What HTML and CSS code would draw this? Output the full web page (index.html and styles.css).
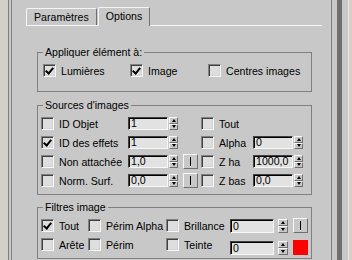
FILE: index.html
```html
<!DOCTYPE html>
<html>
<head>
	<title>Options</title>
	<link rel="stylesheet" href="styles.css">
</head>
<body>
	<div class="frame">
		<div class="panel">

			<!-- Tabs -->
			<div class="tabs">
				<div class="tab">Paramètres</div>
				<div class="tab selected">Options</div>
			</div>

			<!-- Appliquer élément à -->
			<fieldset class="group first">
				<legend>Appliquer élément à:</legend>
				<div class="row apply">
					<label class="item w87"><span class="cb on"></span>Lumières</label>
					<label class="item w78"><span class="cb on"></span>Image</label>
					<label class="item"><span class="cb"></span>Centres images</label>
				</div>
			</fieldset>

			<!-- Sources d'images -->
			<fieldset class="group sources">
				<legend>Sources d'images</legend>
				<div class="row">
					<label class="item w87"><span class="cb"></span>ID Objet</label>
					<div class="edit">1</div><div class="spin"><span></span><span class="dn"></span></div>
					<div class="slot"></div>
					<label class="item w52"><span class="cb"></span>Tout</label>
				</div>
				<div class="row">
					<label class="item w87"><span class="cb on"></span>ID des effets</label>
					<div class="edit">1</div><div class="spin"><span></span><span class="dn"></span></div>
					<div class="slot"></div>
					<label class="item w52"><span class="cb"></span>Alpha</label>
					<div class="edit">0</div><div class="spin"><span></span><span class="dn"></span></div>
				</div>
				<div class="row">
					<label class="item w87"><span class="cb"></span>Non attachée</label>
					<div class="edit">1,0</div><div class="spin"><span></span><span class="dn"></span></div>
					<div class="slot"><div class="btn"></div></div>
					<label class="item w52"><span class="cb"></span>Z ha</label>
					<div class="edit">1000,0</div><div class="spin"><span></span><span class="dn"></span></div>
				</div>
				<div class="row">
					<label class="item w87"><span class="cb"></span>Norm. Surf.</label>
					<div class="edit">0,0</div><div class="spin"><span></span><span class="dn"></span></div>
					<div class="slot"><div class="btn"></div></div>
					<label class="item w52"><span class="cb"></span>Z bas</label>
					<div class="edit">0,0</div><div class="spin"><span></span><span class="dn"></span></div>
				</div>
			</fieldset>

			<!-- Filtres image -->
			<fieldset class="group">
				<legend>Filtres image</legend>
				<div class="row">
					<label class="item w47"><span class="cb on"></span>Tout</label>
					<label class="item w78"><span class="cb"></span>Périm Alpha</label>
					<label class="item w64"><span class="cb"></span>Brillance</label>
					<div class="edit wide">0</div><div class="spin tall"><span></span><span class="dn"></span></div>
					<div class="btn"></div>
				</div>
				<div class="row">
					<label class="item w47"><span class="cb"></span>Arête</label>
					<label class="item w78"><span class="cb"></span>Périm</label>
					<label class="item w64"><span class="cb"></span>Teinte</label>
					<div class="edit wide low">0</div><div class="spin tall low"><span></span><span class="dn"></span></div>
					<div class="swatch low"></div>
				</div>
			</fieldset>

		</div>

		<!-- Right scroll strip -->
		<div class="scroll"><div class="thumb"></div></div>
	</div>
</body>
</html>
```
FILE: styles.css
```css
/* Reset */
* {
	margin: 0;
	padding: 0;
	box-sizing: border-box;
}

body {
	width: 352px;
	height: 260px;
	overflow: hidden;
	background-color: #d4d0c8;
	font-family: "Liberation Sans", Arial, sans-serif;
	font-size: 10.6px;
	color: #000;
}

/* Outer frame with double edge */
.frame {
	display: flex;
	width: 341px;
	height: 260px;
	margin-left: 8px;
	border-left: 1px solid #808080;
	border-right: 1px solid #e8e8e8;
	background-color: #c8c8c8;
}

.panel {
	flex: 1;
	margin-left: 2px;
	border-left: 1px solid #808080;
	padding-left: 14px;
}

.scroll {
	width: 17px;
	border-left: 1px solid #7a7a7a;
	padding-left: 5px;
}

.scroll .thumb {
	width: 5px;
	height: 100%;
	background-color: #6e6e6e;
}

/* Tabs */
.tabs {
	display: flex;
	align-items: flex-end;
	width: 296px;
	height: 26px;
	border-bottom: 1px solid #f4f4f4;
}

.tab {
	height: 17px;
	padding: 0 7px;
	margin-right: 1px;
	line-height: 16px;
	border-top: 1px solid #f4f4f4;
	border-left: 1px solid #f4f4f4;
	border-right: 1px solid #707070;
	border-radius: 2px 2px 0 0;
	white-space: nowrap;
}

.tab.selected {
	height: 19px;
	margin-bottom: -1px;
	line-height: 17px;
	background-color: #c8c8c8;
}

/* Group boxes */
.group {
	width: 275px;
	margin: 6px 0 0 11px;
	border: 1px solid #808080;
	padding: 3px 0 4px 0;
}

.group.first {
	margin-top: 20px;
	padding-bottom: 11px;
}

.group.sources {
	margin-top: 7px;
}

.group legend {
	margin-left: 5px;
	padding: 0 2px;
	line-height: 12px;
}

.row {
	display: flex;
	align-items: center;
	height: 19px;
	padding-left: 3px;
}

.row.apply {
	padding-left: 5px;
}

.item {
	display: flex;
	align-items: center;
	white-space: nowrap;
}

.w47 { width: 47px; }
.w52 { width: 52px; }
.w64 { width: 64px; }
.w78 { width: 78px; }
.w87 { width: 87px; }

/* Checkbox */
.cb {
	flex: none;
	width: 13px;
	height: 13px;
	margin-right: 5px;
	border: 1px solid;
	border-color: #808080 #f8f8f8 #f8f8f8 #808080;
	box-shadow: inset 1px 1px 0 #404040, inset -1px -1px 0 #d4d4d4;
	background-color: #dedede;
	position: relative;
}

.cb.on::after {
	content: "";
	position: absolute;
	left: 3px;
	top: 1px;
	width: 3px;
	height: 6px;
	border-right: 2px solid #000;
	border-bottom: 2px solid #000;
	transform: rotate(40deg);
}

/* Spinner edit */
.edit {
	flex: none;
	width: 40px;
	height: 13px;
	padding-left: 2px;
	line-height: 11px;
	border: 1px solid;
	border-color: #404040 #f8f8f8 #f8f8f8 #404040;
	box-shadow: inset 1px 1px 0 #000;
	background-color: #e2e2e2;
}

.edit.wide {
	width: 44px;
	height: 14px;
	line-height: 12px;
}

.spin {
	flex: none;
	display: flex;
	flex-direction: column;
	width: 9px;
	height: 13px;
	margin-left: 1px;
}

.spin.tall {
	width: 10px;
	height: 14px;
	margin-left: 4px;
}

.spin span {
	flex: 1;
	display: flex;
	align-items: center;
	justify-content: center;
	border: 1px solid;
	border-color: #f8f8f8 #707070 #707070 #f8f8f8;
	background-color: #c8c8c8;
}

.spin span::after {
	content: "";
	border-left: 2.5px solid transparent;
	border-right: 2.5px solid transparent;
	border-bottom: 3px solid #000;
}

.spin span.dn::after {
	border-bottom: 0;
	border-top: 3px solid #000;
}

/* Slot holding the small picker button */
.slot {
	flex: none;
	width: 23px;
	padding-left: 5px;
}

.btn {
	flex: none;
	display: flex;
	justify-content: center;
	align-items: center;
	width: 15px;
	height: 15px;
	border: 1px solid;
	border-color: #f8f8f8 #707070 #707070 #f8f8f8;
	background-color: #c8c8c8;
}

.row > .btn {
	margin-left: 5px;
}

.btn::after {
	content: "";
	width: 1px;
	height: 9px;
	background-color: #000;
}

.swatch {
	flex: none;
	width: 15px;
	height: 15px;
	margin-left: 5px;
	background-color: #ff0000;
}

.low {
	margin-top: 6px;
}
```
